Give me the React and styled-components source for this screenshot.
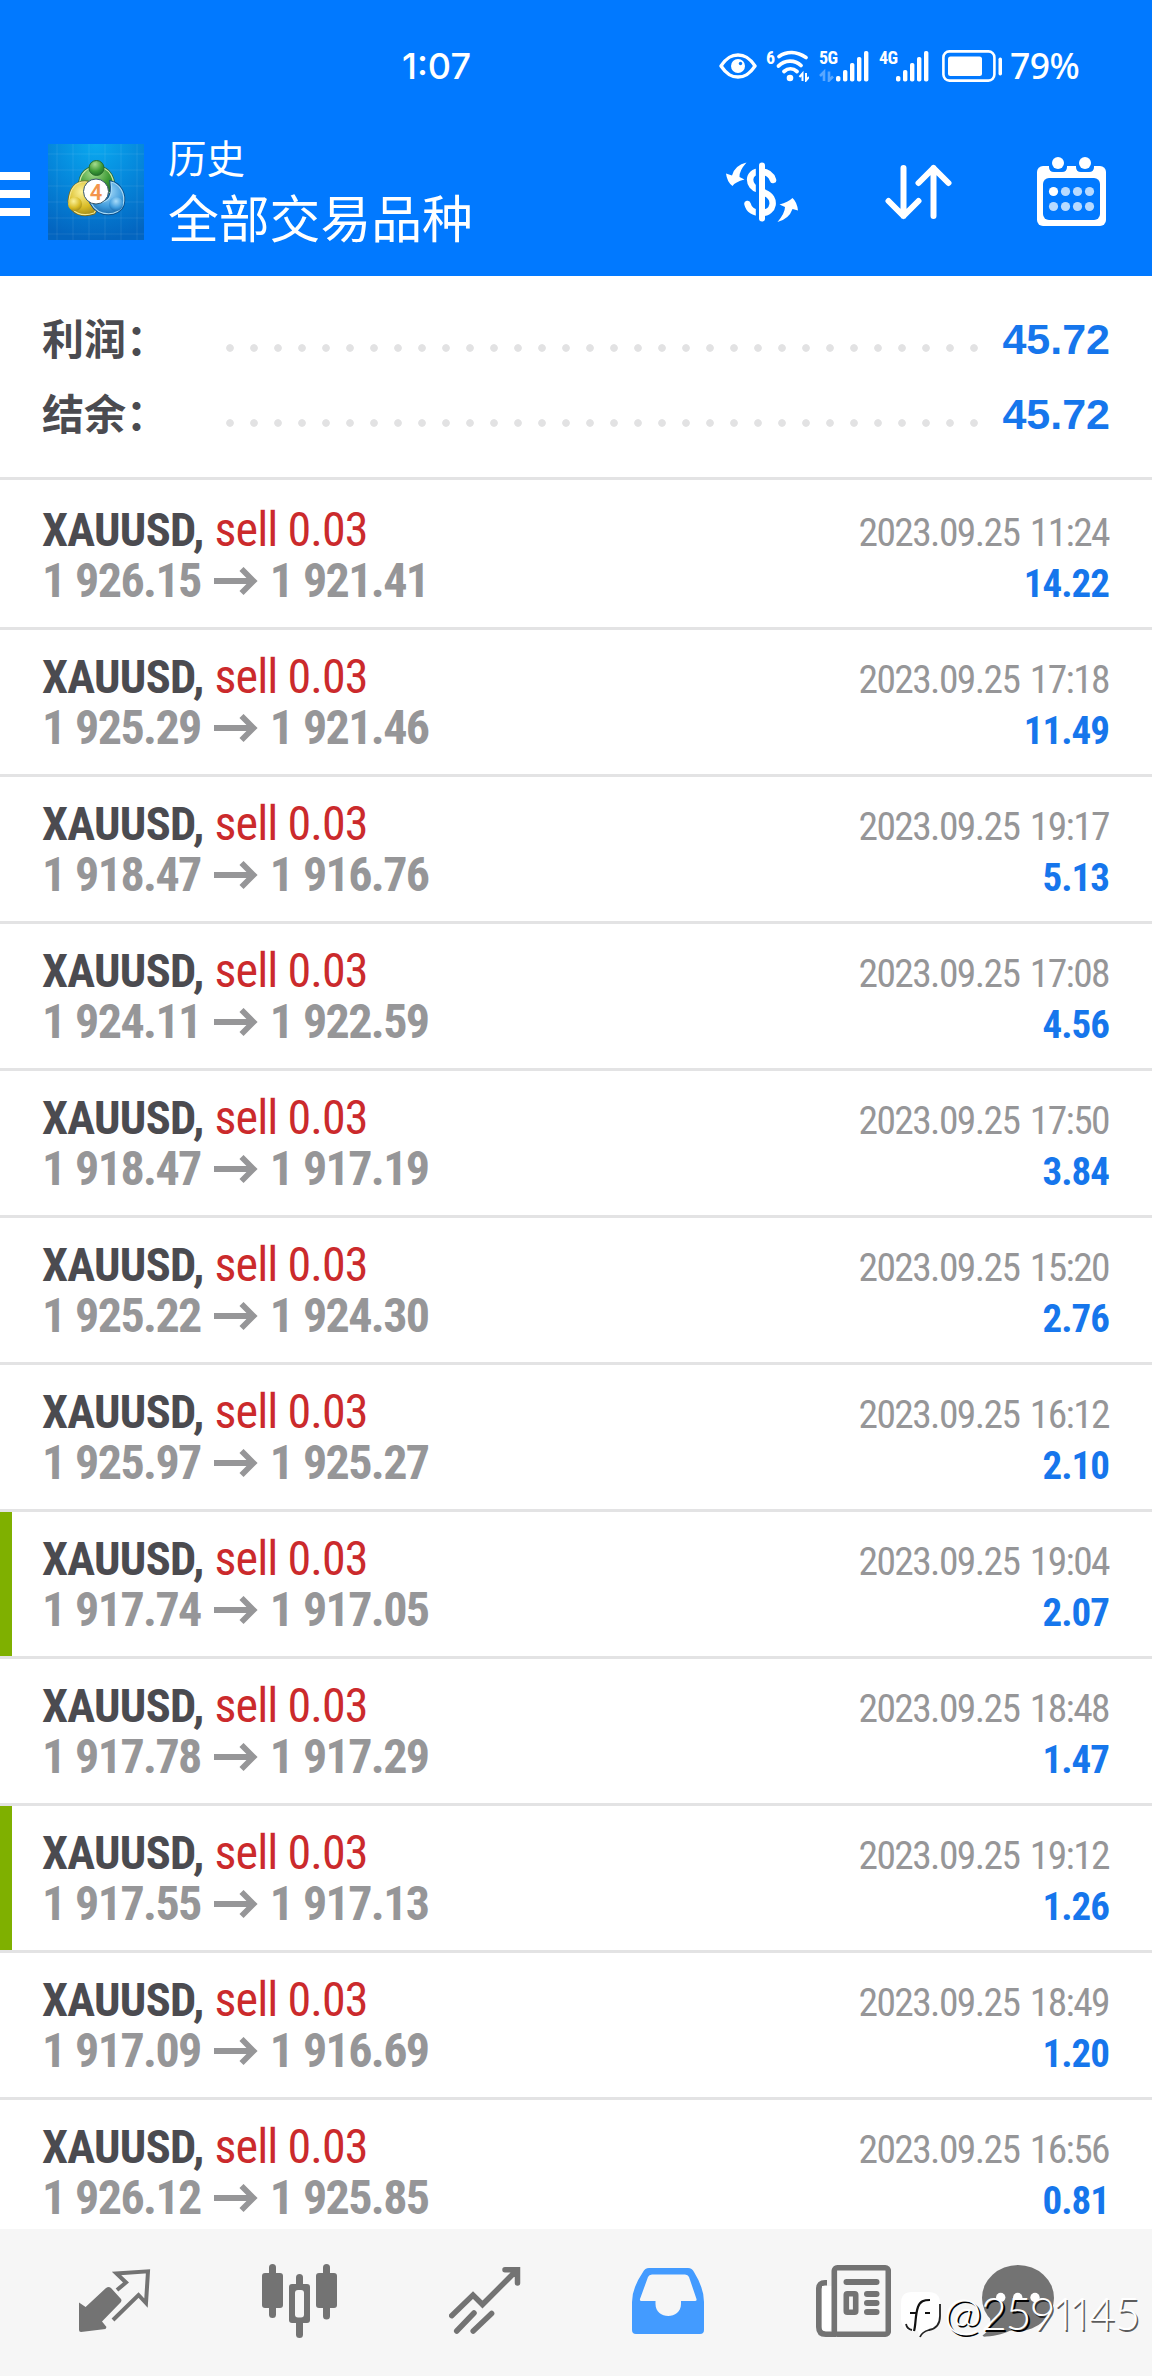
import styled, { createGlobalStyle } from "styled-components";

const deals = [
  { open: "1 926.15", close: "1 921.41", time: "2023.09.25 11:24", profit: "14.22" },
  { open: "1 925.29", close: "1 921.46", time: "2023.09.25 17:18", profit: "11.49" },
  { open: "1 918.47", close: "1 916.76", time: "2023.09.25 19:17", profit: "5.13" },
  { open: "1 924.11", close: "1 922.59", time: "2023.09.25 17:08", profit: "4.56" },
  { open: "1 918.47", close: "1 917.19", time: "2023.09.25 17:50", profit: "3.84" },
  { open: "1 925.22", close: "1 924.30", time: "2023.09.25 15:20", profit: "2.76" },
  { open: "1 925.97", close: "1 925.27", time: "2023.09.25 16:12", profit: "2.10" },
  { open: "1 917.74", close: "1 917.05", time: "2023.09.25 19:04", profit: "2.07", marked: true },
  { open: "1 917.78", close: "1 917.29", time: "2023.09.25 18:48", profit: "1.47" },
  { open: "1 917.55", close: "1 917.13", time: "2023.09.25 19:12", profit: "1.26", marked: true },
  { open: "1 917.09", close: "1 916.69", time: "2023.09.25 18:49", profit: "1.20" },
  { open: "1 926.12", close: "1 925.85", time: "2023.09.25 16:56", profit: "0.81" },
];

const totals = [
  { label: "利润：", value: "45.72" },
  { label: "结余：", value: "45.72" },
];

function EyeIcon() {
  return (
    <svg width="38" height="26" viewBox="0 0 38 26" fill="none">
      <path d="M2 13C8 4 13 2 19 2s11 2 17 11c-6 9-11 11-17 11S8 22 2 13Z" stroke="#fff" strokeWidth="3.4" strokeLinejoin="round" />
      <circle cx="19" cy="13" r="7" fill="#fff" />
      <circle cx="21.5" cy="10.5" r="1.7" fill="#0179ff" />
    </svg>
  );
}

function WifiIcon() {
  return (
    <svg width="34" height="32" viewBox="0 0 34 32" fill="none" stroke="#fff" strokeWidth="3.8">
      <path d="M4 6.500C12 1 22 1.500 31 7.500" strokeLinecap="round" />
      <path d="M3.500 16C9.500 9.500 20 9.500 26 15.500" strokeLinecap="round" />
      <path d="M9 21.500c4-3.600 9-3.600 13 0" strokeLinecap="round" />
      <circle cx="15" cy="28" r="3.300" fill="#fff" stroke="none" />
      <path d="M27.500 31v-7.500l-3 3.500M31 23v7.500l3-3.500" strokeWidth="2" />
    </svg>
  );
}

function SignalIcon({ faded }) {
  return (
    <svg width="50" height="32" viewBox="0 0 50 32" fill="#fff">
      {faded && <path d="M5 31v-9l-4 4M10 21.500v9l4-4" fill="none" stroke="#fff" strokeWidth="2.600" opacity=".35" />}
      <rect x="17" y="26" width="4.400" height="5.500" rx="1.800" />
      <rect x="24" y="20" width="4.400" height="11.500" rx="1.800" />
      <rect x="31" y="13" width="4.400" height="18.500" rx="1.800" />
      <rect x="38" y="7" width="4.400" height="24.500" rx="1.800" />
      <rect x="45" y="1" width="4.400" height="30.500" rx="1.800" />
    </svg>
  );
}

function BatteryIcon() {
  return (
    <svg width="60" height="32" viewBox="0 0 60 32">
      <rect x="1.400" y="1.400" width="51" height="29.200" rx="6" fill="none" stroke="#fff" strokeWidth="2.600" />
      <rect x="6" y="6.500" width="34" height="19.500" rx="2.500" fill="#fff" />
      <rect x="56.500" y="7.500" width="3.500" height="18" rx="1.700" fill="#fff" />
    </svg>
  );
}

function AppLogo() {
  return (
    <svg width="96" height="96" viewBox="0 0 96 96">
      <defs>
        <radialGradient id="logoBg" cx=".5" cy="0" r="1">
          <stop offset="0" stopColor="#0aa9f0" />
          <stop offset=".5" stopColor="#0587db" />
          <stop offset="1" stopColor="#0365c0" />
        </radialGradient>
        <radialGradient id="green" cx=".4" cy=".25" r=".8">
          <stop offset="0" stopColor="#a6dc8e" />
          <stop offset=".6" stopColor="#3d9a35" />
          <stop offset="1" stopColor="#1c6b28" />
        </radialGradient>
        <radialGradient id="yellow" cx=".4" cy=".3" r=".8">
          <stop offset="0" stopColor="#fbf29a" />
          <stop offset=".6" stopColor="#d9bb25" />
          <stop offset="1" stopColor="#94801a" />
        </radialGradient>
        <radialGradient id="blue" cx=".5" cy=".3" r=".8">
          <stop offset="0" stopColor="#a8dcfa" />
          <stop offset=".6" stopColor="#3f9bdc" />
          <stop offset="1" stopColor="#0d5b9f" />
        </radialGradient>
      </defs>
      <rect width="96" height="96" fill="url(#logoBg)" />
      <path d="M9 0v96M25 0v96M41 0v96M57 0v96M73 0v96M89 0v96M0 10h96M0 26h96M0 42h96M0 58h96M0 74h96M0 90h96" stroke="#fff" strokeOpacity=".09" />
      <path d="M32 50c-3-17 4-27 17-27s19 12 16 27l-7-3c-5-8-14-8-19 0Z" fill="url(#green)" stroke="#2c6f35" strokeWidth="3" />
      <path d="M32 50c-3-17 4-27 17-27s19 12 16 27l-7-3c-5-8-14-8-19 0Z" fill="url(#green)" stroke="#cbe8a5" strokeWidth="1.200" />
      <path d="M39 38c-12-1-17 8-18 19 2 13 14 16 25 12l6-9c-10 0-15-5-13-14Z" fill="url(#yellow)" stroke="#7c6e1c" strokeWidth="3" />
      <path d="M39 38c-12-1-17 8-18 19 2 13 14 16 25 12l6-9c-10 0-15-5-13-14Z" fill="url(#yellow)" stroke="#f5e990" strokeWidth="1.200" />
      <path d="M63 38c9 2 15 12 12 23-4 11-24 13-32-2l7-1c11 1 15-6 13-20Z" fill="url(#blue)" stroke="#0c4d88" strokeWidth="3" />
      <path d="M63 38c9 2 15 12 12 23-4 11-24 13-32-2l7-1c11 1 15-6 13-20Z" fill="url(#blue)" stroke="#a5daf6" strokeWidth="1.200" />
      <circle cx="48.500" cy="24" r="7.500" fill="url(#green)" stroke="#286f2a" />
      <circle cx="27" cy="60" r="7" fill="url(#yellow)" />
      <circle cx="68" cy="60" r="7" fill="url(#blue)" />
      <circle cx="48" cy="47.500" r="12.500" fill="#fff" stroke="#35576a" strokeWidth="1" />
      <text x="48" y="55.500" textAnchor="middle" fontFamily="Roboto, sans-serif" fontSize="22" fontWeight="600" fill="#f3954c">4</text>
    </svg>
  );
}

function CurrencyIcon() {
  return (
    <svg width="74" height="60" viewBox="0 0 74 60" fill="#fff">
      <path d="M47 18C45 12 40 9.500 34 9.500c-13 0-13 15-1 18.500l6 3c12 5 9 20-3 20-9 0-13-3-14.500-9" fill="none" stroke="#fff" strokeWidth="6.500" strokeLinecap="round" />
      <path d="M31.500 3v54" stroke="#0179ff" strokeWidth="3.400" />
      <path d="M36 3.500v53" stroke="#fff" strokeWidth="6" strokeLinecap="round" />
      <path d="M20.500.5Q13 9 13.500 15L18.500 17.500Q9 20 6.500 24Q1 20 0 11.500L6 13.500Q9 3 20.500.5Z" />
      <path d="M51.500 60Q59 51 59 45L53.500 42.500Q62 40 66.500 36Q71 40 72 48.500L66.500 47Q63 57 51.500 60Z" />
    </svg>
  );
}

function SortIcon() {
  return (
    <svg width="68" height="56" viewBox="0 0 68 56" fill="none" stroke="#fff" strokeWidth="6" strokeLinecap="round" strokeLinejoin="round">
      <path d="M18.500 4v48M3.500 37l15 15 15-15M48.500 52V4M33.500 19l15-15 15 15" />
    </svg>
  );
}

function CalendarIcon() {
  return (
    <svg width="70" height="70" viewBox="0 0 70 70">
      <rect x="0" y="9" width="69" height="60" rx="6" fill="#fff" />
      <rect x="6" y="21" width="57" height="42" rx="6" fill="#0179ff" />
      <path d="M12 7h18v3q0 5-5 5h-8q-5 0-5-5ZM39 7h18v3q0 5-5 5h-8q-5 0-5-5Z" fill="#0179ff" />
      <circle cx="21" cy="6" r="6" fill="#fff" />
      <circle cx="48" cy="6" r="6" fill="#fff" />
      {[16.5, 28.5, 40.5, 52.5].map((x, i) => (
        <g key={x} fill="#fff">
          <circle cx={x} cy="34.500" r="4.600" opacity={i === 0 ? 1 : 0.72} />
          <circle cx={x} cy="49.500" r="4.600" opacity=".72" />
        </g>
      ))}
    </svg>
  );
}

function PriceArrow() {
  return (
    <svg width="44" height="30" viewBox="0 0 44 30" fill="none" stroke="#969698" strokeWidth="5.800">
      <path d="M0 14h40M27.500 2l12 12-12 12" />
    </svg>
  );
}

function QuotesIcon() {
  return (
    <svg width="72" height="63" viewBox="0 0 72 63" fill="none">
      <path d="M38 21l9-7.500L37.500 4.500 69 2.300 67 34l-7.500-8L34 51" stroke="#737373" strokeWidth="4" />
      <path d="M29 18q2 0 3 1l10 11q1 1 0 3L23 52.500l4.500 5.500-1 2L2 63q-2 0-2-2V33.500l6.600 4.500L27 19Z" fill="#737373" />
    </svg>
  );
}

function ChartIcon() {
  return (
    <svg width="75" height="74" viewBox="0 0 75 74" fill="#737373">
      <rect x="7" width="7" height="54" rx="3.500" />
      <rect y="9" width="21" height="35" rx="3" />
      <rect x="34" y="10" width="7" height="64" rx="3.500" />
      <rect x="27" y="20" width="21" height="39" rx="3" />
      <rect x="33" y="26" width="9" height="27.500" rx="3" fill="#f6f6f6" />
      <rect x="61" width="7" height="55.500" rx="3.500" />
      <rect x="54" y="9" width="21" height="35" rx="3" />
    </svg>
  );
}

function TradeIcon() {
  return (
    <svg width="72" height="67" viewBox="0 0 72 67" fill="none" stroke="#737373" strokeWidth="5.500" strokeLinecap="round">
      <path d="M2.700 48.700L24 28l9.500 9.500L68 3M56 2.800h12.500V16M25 46L7.700 64M42.600 46.500L24.200 64" />
    </svg>
  );
}

function InboxIcon() {
  return (
    <svg width="72" height="66" viewBox="0 0 72 66">
      <path fillRule="evenodd" fill="#439bff" d="M17 0H56q4 0 6 4Q72 20 72 34V62q0 4-4 4H4q-4 0-4-4V34Q0 20 11 4q2-4 6-4ZM20 6.500q-3 0-4 2.500L8 31q-.5 2 1.500 2H23.500v3c0 16 25.500 16 25.500 0v-3H63q2 0 1.500-2L57 9q-1-2.500-4-2.500Z" />
    </svg>
  );
}

function NewsIcon() {
  return (
    <svg width="75" height="72" viewBox="0 0 75 72" fill="#737373">
      <path d="M11 17.800H9q-6.200 0-6.200 6.200v38q0 7.200 7 7.200H20" fill="none" stroke="#737373" strokeWidth="5.600" />
      <path d="M6 21h10v38l-2 7H9q-3 0-3-3Z" fill="#fff" />
      <rect x="18.300" y="2.800" width="54" height="66.400" rx="3" fill="#f6f6f6" stroke="#737373" strokeWidth="5.600" />
      <rect x="27.500" y="14" width="36" height="6" rx="3" />
      <rect x="30.300" y="28.800" width="9.400" height="18.400" rx="1" fill="#f6f6f6" stroke="#737373" strokeWidth="5.600" />
      <rect x="48" y="26" width="15.500" height="6" rx="3" />
      <rect x="48" y="35" width="15.500" height="6" rx="3" />
      <rect x="48" y="44" width="15.500" height="6" rx="3" />
    </svg>
  );
}

function ChatIcon() {
  return (
    <svg width="73" height="72" viewBox="0 0 73 72" fill="#737373">
      <ellipse cx="36" cy="33" rx="36" ry="33" />
      <path d="M8 53c2 8-1 13-7.500 17.500Q1 72 4 71.500C15 71 23 68 30 65Z" />
      <g fill="#fff">
        <circle cx="18.700" cy="32.500" r="4.700" />
        <circle cx="35.700" cy="32.500" r="4.700" />
        <circle cx="53" cy="32.500" r="4.700" />
      </g>
    </svg>
  );
}

function WatermarkLogo() {
  return (
    <svg width="44" height="50" viewBox="0 0 44 50" fill="none">
      <path d="M12 2h16q12 0 12 11v14q0 12-12 14-7 1-9 6l-1-6h-6Q1 40 1 28V13Q1 2 12 2Z" fill="#fff" />
      <path d="M14 41c2-6 1-16 4-24 2-6 6-7 12-7M10 23h6M25 23h5" stroke="#111" strokeWidth="2.200" />
      <path d="M40 14v12q0 12-11 14-7 2-9 7M6 34q1 5 6 6" stroke="#222" strokeWidth="1.800" />
    </svg>
  );
}

function App() {
  return (
    <>
      <GlobalStyle />
      <Screen>
        <Header>
          <StatusBar>
            <Clock>1:07</Clock>
            <StatusIcons>
              <EyeIcon />
              <WifiGroup>
                <Tiny>6</Tiny>
                <WifiIcon />
              </WifiGroup>
              <SignalGroup>
                <Tiny>5G</Tiny>
                <SignalIcon faded />
              </SignalGroup>
              <SignalGroup>
                <Tiny>4G</Tiny>
                <SignalIcon />
              </SignalGroup>
              <Battery>
                <BatteryIcon />
              </Battery>
              <Percent>79%</Percent>
            </StatusIcons>
          </StatusBar>
          <Toolbar>
            <MenuButton>
              <MenuLine />
              <MenuLine />
              <MenuLine />
            </MenuButton>
            <AppLogo />
            <Titles>
              <Subtitle>历史</Subtitle>
              <Title>全部交易品种</Title>
            </Titles>
            <Actions>
              <CurrencyIcon />
              <SortIcon />
              <CalendarIcon />
            </Actions>
          </Toolbar>
        </Header>

        <Summary>
          {totals.map((t) => (
            <SummaryRow key={t.label}>
              <SummaryLabel>{t.label}</SummaryLabel>
              <Leader />
              <SummaryValue>{t.value}</SummaryValue>
            </SummaryRow>
          ))}
        </Summary>

        <DealList>
          {deals.map((d) => (
            <Deal key={d.time} $marked={d.marked}>
              <Line>
                <Symbol>XAUUSD,</Symbol>
                <Side>sell 0.03</Side>
                <Time>{d.time}</Time>
              </Line>
              <Line>
                <Price>{d.open}</Price>
                <ArrowBox>
                  <PriceArrow />
                </ArrowBox>
                <Price>{d.close}</Price>
                <Profit>{d.profit}</Profit>
              </Line>
            </Deal>
          ))}
        </DealList>

        <BottomNav>
          <NavItem><QuotesIcon /></NavItem>
          <NavItem><ChartIcon /></NavItem>
          <NavItem><TradeIcon /></NavItem>
          <NavItem><InboxIcon /></NavItem>
          <NavItem><NewsIcon /></NavItem>
          <NavItem><ChatIcon /></NavItem>
        </BottomNav>

        <Watermark>
          <WatermarkLogo />
          <WatermarkText>
            <Strong>@25</Strong>
            <Faint>91145</Faint>
          </WatermarkText>
        </Watermark>
      </Screen>
    </>
  );
}

const condensed = `"Roboto Condensed", Roboto, sans-serif`;
const cjk = `Roboto, "Noto Sans CJK SC", sans-serif`;

const GlobalStyle = createGlobalStyle`
  * {
    box-sizing: border-box;
  }
  body {
    margin: 0;
    background: #fff;
  }
  svg {
    display: block;
    flex: none;
  }
`;

const Screen = styled.main`
  position: relative;
  display: flex;
  flex-direction: column;
  width: 1152px;
  height: 2376px;
  overflow: hidden;
  background: #fff;
  font-family: ${cjk};
`;

const Header = styled.header`
  flex: none;
  height: 276px;
  background: #0179ff;
  color: #fff;
`;

const StatusBar = styled.div`
  display: flex;
  align-items: center;
  height: 132px;
  padding-left: 402px;
`;

const Clock = styled.span`
  width: 317px;
  font: 500 36px/1 Inter, sans-serif;
`;

const StatusIcons = styled.div`
  display: flex;
  align-items: center;
`;

const WifiGroup = styled.div`
  display: flex;
  align-items: flex-start;
  width: 43px;
  margin-left: 9px;
`;

const SignalGroup = styled.div`
  display: grid;
  width: 50px;
  margin-left: 10px;
  > * {
    grid-area: 1 / 1;
  }
`;

const Battery = styled.div`
  margin-left: 13px;
`;

const Tiny = styled.span`
  font: 700 18px/16px ${condensed};
  letter-spacing: -0.5px;
`;

const Percent = styled.span`
  margin-left: 8px;
  font: 500 35.5px/1 "Noto Sans", sans-serif;
  letter-spacing: -0.5px;
`;

const Toolbar = styled.div`
  display: flex;
  align-items: center;
  height: 120px;
  padding-right: 45px;
`;

const MenuButton = styled.div`
  display: flex;
  flex-direction: column;
  gap: 10px;
  width: 48px;
  padding-top: 4px;
`;

const MenuLine = styled.span`
  width: 30px;
  height: 8px;
  background: #fff;
`;

const Titles = styled.div`
  margin-left: 24px;
  padding-top: 5px;
`;

const Subtitle = styled.div`
  font-size: 38.5px;
  line-height: 52px;
`;

const Title = styled.div`
  font-size: 50.8px;
  line-height: 69px;
`;

const Actions = styled.div`
  display: flex;
  align-items: center;
  gap: 84.5px;
  margin-left: auto;
`;

const Summary = styled.section`
  flex: none;
  height: 204px;
  padding: 26px 43px 0;
  border-bottom: 3px solid #e3e3e4;
`;

const SummaryRow = styled.div`
  display: flex;
  align-items: center;
  height: 75px;
  font-size: 42px;
  font-weight: 700;
`;

const SummaryLabel = styled.span`
  width: 176px;
  margin-left: -1px;
  padding-bottom: 7px;
  color: #4b4b50;
`;

const Leader = styled.span`
  flex: none;
  width: 768px;
  height: 8px;
  margin-top: 16px;
  background: radial-gradient(circle at 12px 4px, #e2e2e3 3.4px, transparent 4.2px) 0 0 / 24px 8px repeat-x;
`;

const SummaryValue = styled.span`
  margin: 0 -1px 0 auto;
  font-family: "Liberation Sans", sans-serif;
  font-size: 43px;
  color: #1676ec;
`;

const DealList = styled.section`
  flex: 1;
  min-height: 0;
  overflow: hidden;
  padding-top: 3px;
`;

const Deal = styled.article`
  height: 147px;
  padding: 21px 43px 0;
  border-bottom: 3px solid #e3e3e4;
  box-shadow: ${({ $marked }) => ($marked ? "inset 12px 0 #7fb000" : "none")};
  font-family: ${condensed};
`;

const Line = styled.div`
  display: flex;
  align-items: baseline;
  height: 51px;
  line-height: 51px;
  white-space: nowrap;
`;

const Symbol = styled.span`
  margin-left: -1px;
  font-size: 46.5px;
  font-weight: 700;
  letter-spacing: -0.7px;
  color: #4b4b50;
`;

const Side = styled.span`
  margin-left: 11px;
  font-size: 48px;
  letter-spacing: -0.9px;
  color: #cb2a2c;
`;

const Time = styled.span`
  margin-left: auto;
  font-size: 39.5px;
  letter-spacing: -1.6px;
  word-spacing: 3px;
  color: #969698;
`;

const Price = styled.span`
  margin-left: -1px;
  font-size: 48px;
  font-weight: 700;
  letter-spacing: -1.6px;
  word-spacing: 1px;
  color: #969698;
`;

const ArrowBox = styled.span`
  margin: 0 13px;
`;

const Profit = styled.span`
  margin-left: auto;
  font-size: 39px;
  font-weight: 700;
  letter-spacing: -1px;
  color: #1676ec;
`;

const BottomNav = styled.nav`
  display: flex;
  flex: none;
  align-items: center;
  gap: 111.4px;
  height: 147px;
  padding: 0 0 4px 79px;
  background: #f6f6f6;
`;

const NavItem = styled.div`
  display: flex;

  &:last-child {
    margin-left: -20px;
  }
`;

// stamped over the bottom-right corner of the page
const Watermark = styled.div`
  position: absolute;
  left: 900px;
  top: 2290px;
  display: flex;
`;

const WatermarkText = styled.div`
  margin: -2px 0 0;
  font: 300 45px/50px Lato, sans-serif;
  font-variant-numeric: proportional-nums;
  color: #fff;
`;

const Strong = styled.span`
  text-shadow: 2px 2px 0 #000;
`;

const Faint = styled.span`
  text-shadow: 1.5px 1.5px 0 rgba(0, 0, 0, 0.65);
`;

export default App;
